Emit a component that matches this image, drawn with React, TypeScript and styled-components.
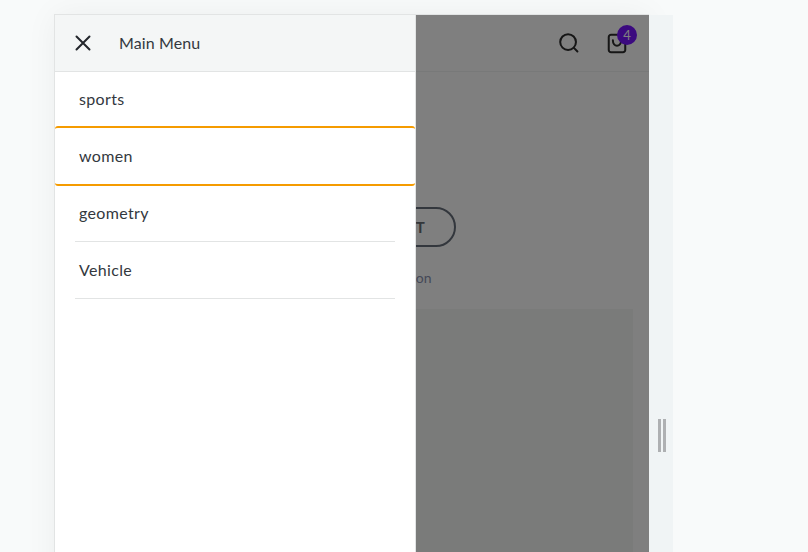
import React from "react";
import styled, { createGlobalStyle } from "styled-components";

const GlobalStyle = createGlobalStyle`
  html, body {
    margin: 0;
    height: 100%;
    background: #f8fafa;
    font-family: "Lato", "Noto Sans", sans-serif;
    overflow: hidden;
  }
`;

const Stage = styled.div`
  height: 100vh;
  padding: 14px 135px 0 54px;
  box-sizing: border-box;
  overflow: hidden;
`;

const Frame = styled.div`
  display: flex;
  height: 840px;
`;

const Viewport = styled.div`
  position: relative;
  flex: 1;
  background: #fff;
  border-top: 1px solid #e2e4e4;
  box-shadow: 0 0 30px rgba(0, 0, 0, 0.05);
  overflow: hidden;
`;

const Rail = styled.div`
  position: relative;
  width: 24px;
  margin-top: 1px;
  background: #f0f4f5;
  display: flex;
  align-items: center;
  justify-content: center;
`;

const Handle = styled.div`
  width: 8px;
  height: 33px;
  box-sizing: border-box;
  border-left: 3px solid #aeb0b2;
  border-right: 3px solid #aeb0b2;
  margin: 1px 0 0 2px;
`;

const Header = styled.header`
  height: 57px;
  box-sizing: border-box;
  border-bottom: 1px solid #f0f2f2;
  display: flex;
  align-items: center;
  justify-content: flex-end;
  gap: 26px;
  padding: 0 21px 0 0;
`;

const IconButton = styled.div`
  position: relative;
  width: 22px;
  height: 24px;
  display: flex;
  align-items: center;
  justify-content: center;
`;

const Badge = styled.span`
  position: absolute;
  top: -6px;
  right: -9px;
  width: 20px;
  height: 20px;
  border-radius: 50%;
  background: #7614ff;
  color: #fff;
  font-size: 13px;
  line-height: 20px;
  text-align: center;
`;

const Hero = styled.section`
  display: flex;
  flex-direction: column;
  align-items: center;
  padding: 135px 16px 0;
`;

const Pill = styled.button`
  width: 209px;
  height: 40px;
  border: 2px solid #666e7a;
  border-radius: 20px;
  background: transparent;
  color: #666c73;
  font: 700 15px "Lato", sans-serif;
  letter-spacing: 1.2px;
`;

const Caption = styled.p`
  margin: 22px 0 0;
  font-size: 14px;
  line-height: 18px;
  color: #8a92b0;
`;

const Picture = styled.div`
  align-self: stretch;
  height: 420px;
  margin-top: 22px;
  background: #f4f7f4;
`;

const Overlay = styled.div`
  position: absolute;
  inset: 0;
  background: rgba(0, 0, 0, 0.5);
`;

const Drawer = styled.nav`
  position: absolute;
  top: 0;
  left: 0;
  bottom: 0;
  width: 362px;
  box-sizing: border-box;
  background: #fff;
  border-left: 1px solid #e2e4e4;
  border-right: 1px solid #e2e4e4;
`;

const DrawerHead = styled.div`
  height: 57px;
  box-sizing: border-box;
  background: #f4f6f6;
  border-bottom: 1px solid #e2e4e4;
  display: flex;
  align-items: center;
  gap: 27px;
  padding: 0 0 0 19px;
  font-size: 16px;
  letter-spacing: 0.1px;
  color: #33383e;
`;

const HeadTitle = styled.span`
  padding-bottom: 2px;
`;

const MenuList = styled.ul`
  list-style: none;
  margin: -1px 0 0;
  padding: 0;
  font-size: 16px;
  letter-spacing: 0.35px;
  color: #33383e;
`;

const MenuItem = styled.li<{ $active?: boolean }>`
  height: ${(p) => (p.$active ? 60 : 57)}px;
  box-sizing: border-box;
  display: flex;
  align-items: center;
  padding: 0 0 2px ${(p) => (p.$active ? 24 : 4)}px;
  margin: ${(p) => (p.$active ? "-2px 0 -1px" : "0 20px")};
  border-radius: ${(p) => (p.$active ? "3px" : "0")};
  border-top: ${(p) => (p.$active ? "2px solid #f59b00" : "0")};
  border-bottom: ${(p) => (p.$active ? "2px solid #f59b00" : "1px solid #e2e4e4")};
`;

const items = ["sports", "women", "geometry", "Vehicle"];

export default function App() {
  return (
    <Stage>
      <GlobalStyle />
      <Frame>
        <Viewport>
          <Header>
            <IconButton>
              <svg width="24" height="24" viewBox="0 0 24 24" fill="none" stroke="#2c2c2c" strokeWidth="2.2" strokeLinecap="round">
                <circle cx="11" cy="11" r="8.6" />
                <path d="M17.6 17.6l3.6 3.6" />
              </svg>
            </IconButton>
            <IconButton>
              <svg width="24" height="24" viewBox="0 0 24 24" fill="none" stroke="#2c2c2c" strokeWidth="2.2" strokeLinecap="round" strokeLinejoin="round">
                <path d="M5.5 3h13a2.5 2.5 0 0 1 2.5 2.5v14a2.5 2.5 0 0 1-2.5 2.5h-13a2.5 2.5 0 0 1-2.5-2.5v-14a2.5 2.5 0 0 1 2.5-2.5z" />
                <path d="M7.5 9c0 8 9 8 9 0" />
              </svg>
              <Badge>4</Badge>
            </IconButton>
          </Header>
          <Hero>
            <Pill>SHOP THE OUTFIT</Pill>
            <Caption>Get free home delivery on</Caption>
            <Picture />
          </Hero>
          <Overlay />
          <Drawer>
            <DrawerHead>
              <svg width="18" height="18" viewBox="0 0 18 18" fill="none" stroke="#23272c" strokeWidth="2" strokeLinecap="round">
                <path d="M2.5 2.5l13 13M15.5 2.5l-13 13" />
              </svg>
              <HeadTitle>Main Menu</HeadTitle>
            </DrawerHead>
            <MenuList>
              {items.map((item) => (
                <MenuItem key={item} $active={item === "women"}>
                  {item}
                </MenuItem>
              ))}
            </MenuList>
          </Drawer>
        </Viewport>
        <Rail>
          <Handle />
        </Rail>
      </Frame>
    </Stage>
  );
}
